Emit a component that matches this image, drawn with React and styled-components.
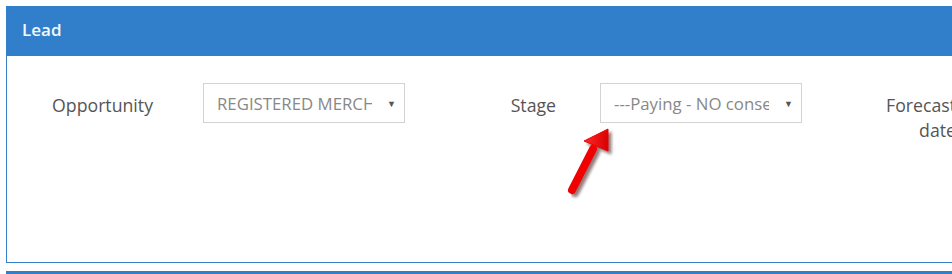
import React from 'react';
import styled, { createGlobalStyle } from 'styled-components';

const GlobalStyle = createGlobalStyle`
  body {
    margin: 0;
    background: #ffffff;
    font-family: "Open Sans", "Liberation Sans", sans-serif;
    overflow: hidden;
  }
`;

const Page = styled.div`
  padding: 6px 0 0 6px;
  width: 1300px;
`;

const Panel = styled.section`
  border: 1px solid #3a7ec6;
  border-top: none;
  border-right: none;
`;

const Header = styled.div`
  height: 50px;
  margin-left: -1px;
  background: #317fcb;
  color: #f4f9ff;
  display: flex;
  align-items: center;
  padding: 0 0 3px 16px;
  box-sizing: border-box;
  font-size: 17px;
  font-weight: 600;
`;

const Body = styled.div`
  position: relative;
  height: 206px;
  padding-top: 27px;
  box-sizing: border-box;
`;

const Row = styled.div`
  display: flex;
  align-items: flex-start;
`;

const Field = styled.div`
  display: flex;
  align-items: flex-start;
  width: 398px;
`;

const Label = styled.div`
  width: 108px;
  margin-left: ${(p) => p.offset}px;
  margin-right: ${(p) => p.gap}px;
  padding-top: 10px;
  text-align: right;
  font-size: 17.7px;
  line-height: 25px;
  color: #555555;
`;

const Select = styled.div`
  width: 202px;
  height: 40px;
  box-sizing: border-box;
  border: 1px solid #d3d3d3;
  display: flex;
  align-items: center;
  padding: 0 8px 0 13px;
  color: #888888;
  font-size: 16.8px;
`;

const Value = styled.span`
  flex: 1;
  overflow: hidden;
  white-space: nowrap;
`;

const Caret = styled.span`
  margin-left: 15px;
  font-size: 9px;
  color: #555555;
`;

const Arrow = styled.svg`
  position: absolute;
  left: 547px;
  top: 58px;
`;

const Next = styled.div`
  margin-top: 8px;
  height: 6px;
  background: #317fcb;
`;

const SelectBox = ({ value }) => (
  <Select>
    <Value>{value}</Value>
    <Caret>▼</Caret>
  </Select>
);

const App = () => (
  <>
    <GlobalStyle />
    <Page>
      <Panel>
        <Header>Lead</Header>
        <Body>
          <Row>
            <Field>
              <Label offset={38} gap={50}>Opportunity</Label>
              <SelectBox value="REGISTERED MERCHANT" />
            </Field>
            <Field>
              <Label offset={43} gap={44}>Stage</Label>
              <SelectBox value="---Paying - NO consent" />
            </Field>
            <Field>
              <Label offset={45} gap={45}>Forecast date</Label>
            </Field>
          </Row>
          <Arrow width="70" height="88" viewBox="0 0 70 88">
            <defs>
              <linearGradient id="red" x1="0" y1="0" x2="1" y2="0">
                <stop offset="0" stopColor="#ff2a2a" />
                <stop offset="1" stopColor="#d80000" />
              </linearGradient>
              <filter id="blur">
                <feGaussianBlur stdDeviation="1.5" />
              </filter>
            </defs>
            <g fill="#3a1010" stroke="#3a1010" opacity="0.55" filter="url(#blur)" transform="translate(3 3)">
              <line x1="18" y1="76" x2="39" y2="35" strokeWidth="8" strokeLinecap="round" />
              <polygon points="54,15 30,27 54,37" />
            </g>
            <g fill="url(#red)" stroke="#f00000">
              <line x1="18" y1="76" x2="39" y2="35" strokeWidth="8" strokeLinecap="round" stroke="#f20000" />
              <polygon points="54,15 30,27 54,37" strokeWidth="1" strokeLinejoin="round" />
            </g>
          </Arrow>
        </Body>
      </Panel>
      <Next />
    </Page>
  </>
);

export default App;
